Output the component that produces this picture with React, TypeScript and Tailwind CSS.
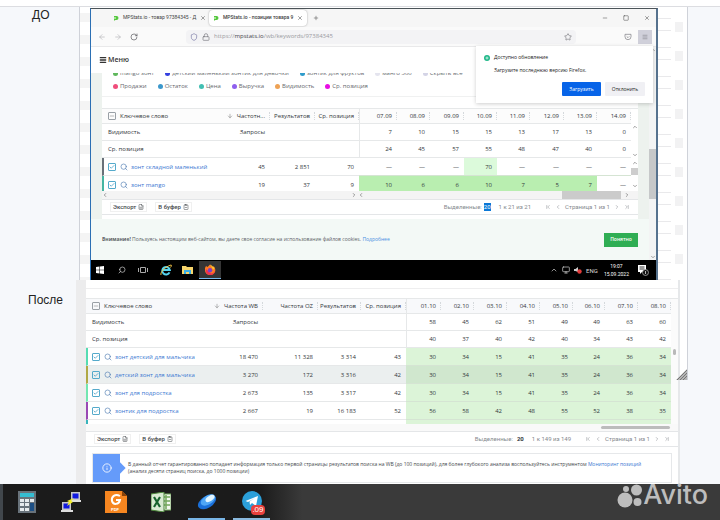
import type { ReactNode } from "react";
import {
  ArrowDown,
  ArrowLeft,
  ArrowRight,
  Check,
  ChevronDown,
  ChevronFirst,
  ChevronLast,
  ChevronLeft,
  ChevronRight,
  ChevronUp,
  ClipboardMinus,
  FileSpreadsheet,
  Info,
  Lock,
  Menu,
  Minus,
  Monitor,
  Plus,
  RotateCw,
  Search,
  Shield,
  Square,
  Star,
  X,
} from "lucide-react";

type Row = {
  word: string;
  stats: string[];
  days: string[];
  strip: string;
  cells: string;
  hovered?: boolean;
};

const SEPTEMBER = ["07.09", "08.09", "09.09", "10.09", "11.09", "12.09", "13.09", "14.09"];
const OCTOBER = ["01.10", "02.10", "03.10", "04.10", "05.10", "06.10", "07.10", "08.10"];

const beforeRows: Row[] = [
  {
    word: "зонт складной маленький",
    stats: ["45", "2 851", "70"],
    days: ["—", "—", "—", "70", "—", "—", "—", "—"],
    strip: "border-l-[#687078]",
    cells: "bg-[#dcfadb]",
  },
  {
    word: "зонт mango",
    stats: ["19", "37", "9"],
    days: ["10", "6", "6", "10", "7", "5", "7", "—"],
    strip: "border-l-[#45b5a2]",
    cells: "bg-[#b9eeb0] font-medium",
  },
];

const afterRows: Row[] = [
  {
    word: "зонт детский для мальчика",
    stats: ["18 470", "11 328", "3 314", "43"],
    days: ["30", "34", "15", "41", "35", "24", "36", "34"],
    strip: "border-l-[#55dcb2]",
    cells: "bg-[#dcf4d8]",
  },
  {
    word: "детский зонт для мальчика",
    stats: ["3 270", "172", "3 316", "42"],
    days: ["30", "34", "15", "41", "35", "24", "36", "34"],
    strip: "border-l-[#b0a845]",
    cells: "bg-[#d0e7ce]",
    hovered: true,
  },
  {
    word: "зонт для подростка",
    stats: ["2 673", "135", "3 317", "42"],
    days: ["30", "34", "15", "41", "35", "24", "36", "34"],
    strip: "border-l-[#72e6b0]",
    cells: "bg-[#dcf4d8]",
  },
  {
    word: "зонтик для подростка",
    stats: ["2 667", "19", "16 183", "52"],
    days: ["56", "58", "42", "48", "55", "52", "38", "35"],
    strip: "border-l-[#9a48b4]",
    cells: "bg-[#dcf4d8]",
  },
  {
    word: "",
    stats: ["", "", "", ""],
    days: ["", "", "", "", "", "", "", ""],
    strip: "border-l-[#38b4bc]",
    cells: "bg-[#dcf4d8]",
  },
];

function CheckBox({ label, partial }: { label: string; partial?: boolean }) {
  return (
    <span className="relative inline-flex size-2 shrink-0">
      <input
        type="checkbox"
        aria-label={label}
        defaultChecked={!partial}
        className={`size-2 appearance-none rounded-[1px] border ${partial ? "border-[#9aa0a6]" : "border-[#55aacb]"}`}
      />
      {partial ? (
        <Minus className="pointer-events-none absolute inset-px size-1.5 text-[#777]" />
      ) : (
        <Check strokeWidth={3} className="pointer-events-none absolute inset-px size-1.5 text-[#3f9bc4]" />
      )}
    </span>
  );
}

type KeywordTableProps = {
  stats: string[];
  statWidths: string[];
  dates: string[];
  dayWidths: string[];
  visibility: string[];
  average: string[];
  rows: Row[];
  headClass: string;
};

function KeywordTable(props: KeywordTableProps) {
  const { stats, statWidths, dates, dayWidths, visibility, average, rows, headClass } = props;
  const line = "border-b border-[#e6e8e9]";
  return (
    <table className="w-full table-fixed border-separate border-spacing-0 text-right text-[6px] leading-[8px] text-[#33373b]">
      <colgroup>
        <col />
        {[...statWidths, ...dayWidths].map((width, i) => (
          <col key={i} className={width} />
        ))}
      </colgroup>
      <thead>
        <tr className={`h-4 ${headClass}`}>
          <th className={`border-t p-0 pl-1.5 text-left font-medium ${line}`}>
            <span className="flex items-center gap-1">
              <CheckBox label="Выбрать все" partial />
              Ключевое слово
            </span>
          </th>
          {stats.map((name, i) => (
            <th key={name} className={`border-t p-0 font-medium whitespace-nowrap ${line}`}>
              <span className="flex items-center justify-end border-r border-dotted border-[#d5d9dc] pr-1">
                {i === 0 && <ArrowDown className="mr-1 size-1.5 shrink-0 text-[#777]" />}
                {name}
              </span>
            </th>
          ))}
          {dates.map((date, i) => (
            <th key={date} className={`border-t p-0 font-medium ${i === 0 ? "border-l" : ""} ${line}`}>
              <span className="block border-r border-dotted border-[#d5d9dc] pr-1">{date}</span>
            </th>
          ))}
        </tr>
      </thead>
      <tbody>
        {[
          { name: "Видимость", values: visibility },
          { name: "Ср. позиция", values: average },
        ].map((summary, row) => (
          <tr key={summary.name} className="h-[17px]">
            <th className={`p-0 pl-1.5 text-left font-medium ${line}`}>{summary.name}</th>
            {stats.map((name, i) => (
              <td key={name} className={`p-0 pr-[5px] font-medium ${line}`}>
                {row === 0 && i === 0 ? "Запросы" : ""}
              </td>
            ))}
            {summary.values.map((value, i) => (
              <td key={i} className={`p-0 pr-[5px] ${i === 0 ? "border-l" : ""} ${line}`}>
                {value}
              </td>
            ))}
          </tr>
        ))}
        {rows.map((row) => (
          <tr key={row.word} className={`odd:h-[18px] even:h-[17px] ${row.hovered ? "bg-[#ebefef]" : ""}`}>
            <td className="p-0 text-left">
              <span className={`flex h-[18px] items-center gap-1 border-b border-l-2 border-b-[#e6e8e9] pl-1 ${row.strip}`}>
                <CheckBox label={row.word} />
                <Search className="size-2 shrink-0 text-[#5580b5]" />
                <a href="#" className="-ml-px whitespace-nowrap text-[#3c78d2]">
                  {row.word}
                </a>
              </span>
            </td>
            {row.stats.map((value, i) => (
              <td key={i} className={`p-0 pr-[5px] ${line}`}>
                {value}
              </td>
            ))}
            {row.days.map((value, i) => (
              <td key={i} className={`border-b border-[#d5e4d3] p-0 pr-[5px] ${value === "—" ? "" : row.cells}`}>
                {value}
              </td>
            ))}
          </tr>
        ))}
      </tbody>
    </table>
  );
}

function TableFooter({ selected, range }: { selected: ReactNode; range: string }) {
  return (
    <div className="flex h-4 items-center border-y border-[#e4e6e8] pr-2 font-['Roboto',sans-serif] text-[6px] leading-[8px] whitespace-nowrap text-[#85898e]">
      <button className="ml-2 flex items-center gap-0.5 border border-[#f0f0f0] px-0.5 font-medium text-[#45494d]">
        Экспорт <FileSpreadsheet className="size-1.5" />
      </button>
      <button className="ml-2 flex items-center gap-0.5 border border-[#f0f0f0] px-0.5 font-medium text-[#45494d]">
        В буфер <ClipboardMinus className="size-1.5" />
      </button>
      <span className="ml-auto">Выделенные:</span>
      {selected}
      <span className="ml-2">{range}</span>
      <button aria-label="Первая страница" className="ml-3.5">
        <ChevronFirst className="size-1.5" />
      </button>
      <button aria-label="Назад" className="ml-1">
        <ChevronLeft className="size-1.5" />
      </button>
      <span className="ml-1">Страница 1 из 1</span>
      <button aria-label="Вперед" className="ml-1">
        <ChevronRight className="size-1.5" />
      </button>
      <button aria-label="Последняя страница" className="ml-1">
        <ChevronLast className="size-1.5" />
      </button>
    </div>
  );
}

function Legend({ items }: { items: { name: string; color: string }[] }) {
  return (
    <ul className="flex gap-[11px] pl-[11px] text-[6px] leading-[8px] whitespace-nowrap text-[#65696d]">
      {items.map((item) => (
        <li key={item.name} className="flex items-center gap-0.5">
          <span className={`size-[5px] rounded-full ${item.color}`} />
          {item.name}
        </li>
      ))}
    </ul>
  );
}

function Favicon() {
  return (
    <svg viewBox="0 0 6 6" className="size-1.5 shrink-0">
      <path d="M1 1h2.5a2 2 0 0 1 0 4H2.5L1 5.8V3.5h2V2.6H1z" fill="#54c83c" />
    </svg>
  );
}

function UpdatePopup() {
  return (
    <div className="absolute top-[37px] right-[3px] flex h-[57px] w-[177px] flex-col bg-white px-2 pt-2 text-[5px] leading-[7px] text-[#222] shadow-[0_1px_4px_rgba(0,0,0,0.2)]">
      <div className="flex items-center gap-1">
        <span className="flex size-1.5 items-center justify-center rounded-full bg-[#20b889] text-white">
          <Plus strokeWidth={4} className="size-1" />
        </span>
        <strong className="font-medium">Доступно обновление</strong>
      </div>
      <p className="mt-1.5 pl-2.5">Загрузите последнюю версию Firefox.</p>
      <div className="mt-2 flex justify-end gap-1">
        <button className="h-3.5 w-[39px] rounded-[1px] bg-[#0764e8] text-white">Загрузить</button>
        <button className="h-3.5 w-10 rounded-[1px] bg-[#f0f0f4]">Отклонить</button>
      </div>
    </div>
  );
}

function BrowserChrome() {
  return (
    <>
      <div className="flex h-[18px] items-center bg-[#f6f6f6] font-['Roboto',sans-serif] text-[5px] whitespace-nowrap text-[#444]">
        <div className="flex w-[118px] items-center gap-1 pr-1.5 pl-[22px]">
          <Favicon />
          <span className="flex-1">MPStats.io - товар 97384345 - Д</span>
          <X className="size-1.5 shrink-0" />
        </div>
        <div className="flex h-4 w-[98px] items-center gap-1 rounded-sm bg-white px-1 shadow-[0_0_2px_rgba(0,0,0,0.35)]">
          <Favicon />
          <span className="flex-1 font-medium">MPStats.io - позиции товара 9</span>
          <X className="size-1.5 shrink-0" />
        </div>
        <Plus className="ml-1.5 size-1.5" />
        <div className="ml-auto flex items-center gap-[15px] pr-1.5">
          <Minus className="size-1.5" />
          <Square className="size-1.5" />
          <X className="size-1.5" />
        </div>
      </div>
      <div className="flex h-5 items-center border-b border-[#e9e9ea] bg-[#fafafa] text-[#77777d]">
        <ArrowLeft className="ml-[7px] size-2 text-[#b5b5b9]" />
        <ArrowRight className="ml-2 size-2 text-[#b5b5b9]" />
        <RotateCw className="ml-2 size-2 text-[#55555b]" />
        <div className="ml-12 flex h-3.5 w-0 flex-1 items-center rounded-sm bg-[#f3f3f5] px-1">
          <Shield className="size-2 shrink-0 text-[#7777a5]" />
          <Lock className="ml-1 size-2 shrink-0" />
          <p className="ml-1 text-[6px] text-[#9a9aa0]">
            https://<span className="text-[#44444a]">mpstats.io</span>/wb/keywords/97384345
          </p>
          <Star className="ml-auto size-2 shrink-0" />
        </div>
        <svg viewBox="0 0 24 24" className="ml-12 size-2" fill="none" stroke="currentColor" strokeWidth="2">
          <path d="M3 4h18v7a9 9 0 0 1-18 0zM8 10l4 4 4-4" />
        </svg>
        <div className="mr-1 ml-1.5 flex size-3.5 items-center justify-center bg-[#d0d0da]">
          <Menu className="size-1.5" />
        </div>
      </div>
    </>
  );
}

function RemoteTaskbar() {
  return (
    <div className="flex h-5 items-center bg-black text-[#d8d8d8]">
      <div className="flex flex-1 items-center">
        <svg viewBox="0 0 8 8" className="ml-[5px] size-2" fill="#fff">
          <path d="M0 1l3.5-.5v3.3H0zM4 .5L8 0v3.8H4zM0 4.3h3.5v3.3L0 7zM4 4.3h4V8l-4-.5z" />
        </svg>
        <Search className="ml-[14px] size-2 -scale-x-100" />
        <svg viewBox="0 0 10 8" className="ml-3 h-2 w-2.5" fill="none" stroke="#aaa">
          <path d="M2.5 1.5h5v5h-5zM.5 2v4M9.5 2v4" />
        </svg>
        <svg viewBox="0 0 12 12" className="ml-3 size-3" fill="none">
          <path d="M9.5 8.4A3.8 3.8 0 1 1 9.8 6H3" stroke="#55d4ef" strokeWidth="2" />
          <path d="M1 11C0 9 4 3 11 1c1 0 0 2-.5 2.5" stroke="#f1c34a" />
        </svg>
        <svg viewBox="0 0 11 10" className="ml-[10px] h-2.5 w-[11px]">
          <path d="M0 1h4l1 1h6v7H0z" fill="#f7d56b" />
          <path d="M2 5h7v4H7V7H4v2H2z" fill="#3ab0e8" />
        </svg>
        <div className="ml-1.5 flex h-[18px] w-[22px] items-center justify-center border-b border-[#76b9ed] bg-[#353535]">
          <svg viewBox="0 0 12 12" className="size-3">
            <path d="M1 4l1-2 1.5 1L6 .5 8 3l1-1c2 1.5 2.5 3 2.3 5A5.3 5.3 0 0 1 1 7z" fill="#ff7a22" />
            <path d="M2 5c-1 3 1 6 4 6s5-2 5-4c-1 2-3 3-5 2z" fill="#ef2f50" />
            <path d="M6 .5c2 1 3 2 3 3l1-1c1 2 0 3-1 3z" fill="#ffc832" />
            <circle cx="6" cy="6.3" r="2.2" fill="#7b3fc6" />
          </svg>
        </div>
      </div>
      <ChevronUp className="size-2" />
      <Monitor className="ml-1 size-2" />
      <svg viewBox="0 0 8 8" className="ml-1 size-2">
        <path d="M0 3h1.5L4 1v5L1.5 5H0z" fill="#ccc" />
        <circle cx="5.5" cy="5.5" r="2.2" fill="#e23b3b" />
      </svg>
      <span className="ml-1 font-['Roboto',sans-serif] text-[6px]">ENG</span>
      <time className="ml-1.5 text-center font-['Roboto',sans-serif] text-[5px] leading-[8px] text-white">
        19:07
        <br />
        15.09.2022
      </time>
      <svg viewBox="0 0 12 12" className="mr-[7px] ml-2 size-3">
        <path d="M1 1h8v7H5l-2 2V8H1z" fill="#fff" />
        <path d="M2.5 3h5M2.5 5h5" stroke="#333" />
        <circle cx="8.5" cy="8.5" r="3" fill="#111" stroke="#bbb" strokeWidth=".7" />
        <path d="M8.5 7v3" stroke="#ddd" strokeWidth=".8" />
      </svg>
    </div>
  );
}

function HorizontalScroll() {
  return (
    <div className="flex h-2 items-center bg-[#f4f4f4] text-[#444]">
      <ChevronLeft className="size-1.5" />
      <ChevronRight className="ml-[243px] size-1.5" />
      <ChevronLeft className="ml-px size-1.5" />
      <span className="ml-auto h-2 w-[59px] bg-[#cbcbcb]" />
      <ChevronRight className="mr-2 ml-[3px] size-1.5" />
    </div>
  );
}

function BeforeWindow() {
  return (
    <div className="relative flex min-w-0 flex-1 flex-col border-t border-r-2 border-l border-t-[#4b5358] border-r-[#56728e] border-l-[#2b6fb3] bg-white">
      <BrowserChrome />
      <div className="flex">
        <div className="min-w-0 flex-1">
          <div className="flex h-[26px] items-center gap-px pl-2 text-[7px] font-semibold text-[#333]">
            <Menu strokeWidth={4} className="size-2" />
            Меню
          </div>
          <div className="bg-[#edf2ee] px-[11px]">
            <div className="bg-white">
              <div className="flex h-1 items-end overflow-hidden">
                <Legend
                  items={[
                    { name: "mango зонт", color: "bg-[#5fb85c]" },
                    { name: "детский маленький зонтик для девочки", color: "bg-[#3440e0]" },
                    { name: "зонтик для фруктов", color: "bg-[#2f9ccb]" },
                    { name: "манго 300", color: "bg-[#e4e4ee]" },
                    { name: "Скрыть все", color: "bg-[#d4d4e6]" },
                  ]}
                />
              </div>
              <div className="border-b border-[#f0f1f1] pt-[5px] pb-1.5">
                <Legend
                  items={[
                    { name: "Продажи", color: "bg-[#f04e7c]" },
                    { name: "Остаток", color: "bg-[#3c98cc]" },
                    { name: "Цена", color: "bg-[#42bfb2]" },
                    { name: "Выручка", color: "bg-[#8f5fee]" },
                    { name: "Видимость", color: "bg-[#eea255]" },
                    { name: "Ср. позиция", color: "bg-[#e80ee4]" },
                  ]}
                />
              </div>
              <div className="mt-[11px] flex h-[83px] overflow-hidden">
                <div className="min-w-0 flex-1">
                  <KeywordTable
                    stats={["Частотн...", "Результатов", "Ср. позиция"]}
                    statWidths={["w-[43px]", "w-[45px]", "w-[44px]"]}
                    dates={SEPTEMBER}
                    dayWidths={[
                      "w-[38px]",
                      "w-[33px]",
                      "w-[34px]",
                      "w-[33px]",
                      "w-[33px]",
                      "w-[34px]",
                      "w-[33px]",
                      "w-[34px]",
                    ]}
                    visibility={["7", "10", "15", "15", "13", "17", "13", "0"]}
                    average={["24", "45", "57", "55", "48", "47", "40", "0"]}
                    rows={beforeRows}
                    headClass="bg-[#fcfcfc]"
                  />
                </div>
                <div className="flex w-[7px] flex-col items-center border-t border-[#e6e8e9] pt-[15px] text-[#444]">
                  <ChevronUp className="size-1.5 shrink-0" />
                  <ChevronDown className="mt-[22px] size-1.5 shrink-0" />
                  <ChevronUp className="mt-0.5 size-1.5 shrink-0" />
                  <span className="mt-0.5 h-[7px] w-full shrink-0 bg-[#cdcdcd]" />
                  <ChevronDown className="mt-2 size-1.5 shrink-0" />
                </div>
              </div>
              <HorizontalScroll />
              <TableFooter
                selected={<mark className="ml-0.5 bg-[#0a78d7] text-white">20</mark>}
                range="1 к 21 из 21"
              />
              <div className="h-1" />
            </div>
          </div>
          <div className="flex h-[41px] items-center bg-[#f3f9f6] px-[11px] text-[5px] text-[#5c6266]">
            <p className="flex-1">
              <b>Внимание!</b> Пользуясь настоящим веб-сайтом, вы даете свое согласие на использование файлов cookies.{" "}
              <a href="#" className="text-[#4a90e2]">
                Подробнее
              </a>
            </p>
            <button className="h-3.5 w-[34px] bg-[#2fae54] font-semibold text-white">Понятно</button>
          </div>
        </div>
        <div className="flex w-[7px] flex-col items-center bg-[#f3f4f4] text-[#555]">
          <ChevronUp className="size-1.5" />
          <span className="mt-[96px] h-[50px] w-full bg-[#c6c8c9]" />
          <ChevronDown className="mt-auto size-1.5" />
        </div>
      </div>
      <RemoteTaskbar />
      <UpdatePopup />
    </div>
  );
}

function AfterPanel() {
  return (
    <div className="min-w-0 flex-1 border-r-2 border-l-[10px] border-r-[#e6e8ea] border-l-[#ececed] bg-white pb-px">
      <div className="h-[9px] border-b border-[#eeeeef]" />
      <div className="mt-[9px] flex h-[126px] overflow-hidden">
        <div className="min-w-0 flex-1">
          <KeywordTable
            stats={["Частота WB", "Частота OZ", "Результатов", "Ср. позиция"]}
            statWidths={["w-[48px]", "w-[55px]", "w-[43px]", "w-[45px]"]}
            dates={OCTOBER}
            dayWidths={[
              "w-[35px]",
              "w-[33px]",
              "w-[33px]",
              "w-[33px]",
              "w-[33px]",
              "w-[32px]",
              "w-[33px]",
              "w-[33px]",
            ]}
            visibility={["58", "45", "62", "51", "49", "49", "63", "60"]}
            average={["40", "37", "40", "42", "40", "34", "43", "42"]}
            rows={afterRows}
            headClass="bg-[#f8f9fb]"
          />
        </div>
        <div className="w-[7px] border-t border-[#e6e8e9] bg-[#fbfbfb] pt-[50px]">
          <span className="mx-auto block h-1.5 w-[3px] rounded-full bg-[#b9b9b9]" />
        </div>
      </div>
      <div className="flex h-[7px] items-center justify-end bg-[#f9f9f9] pr-2">
        <span className="h-[3px] w-[69px] rounded-full bg-[#bcbcbc]" />
      </div>
      <TableFooter selected={<b className="ml-1 text-[#33373b]">20</b>} range="1 к 149 из 149" />
      <div className="mx-1.5 mt-1.5 flex h-[30px] border border-[#e6e8ea] text-[5px] leading-[7px] text-[#45494d]">
        <div className="relative flex w-[27px] shrink-0 items-center justify-center bg-[#659bfa] text-white">
          <Info className="size-2.5" />
          <span className="absolute -right-1 size-2 rotate-45 bg-[#659bfa]" />
        </div>
        <p className="pt-[7px] pl-2 whitespace-nowrap">
          В данный отчет гарантированно попадает информация только первой страницы результатов поиска на WB (до 100
          позиций), для более глубокого анализа воспользуйтесь инструментом{" "}
          <a href="#" className="text-[#3c78d2]">
            Мониторинг позиций
          </a>
          <br />
          (анализ десяти страниц поиска, до 1000 позиции)
        </p>
      </div>
    </div>
  );
}

function DesktopTaskbar() {
  return (
    <div className="relative flex h-9 items-center bg-linear-to-r from-[#1b1b1b] from-36% to-[#3a3a3a] to-42% font-['Liberation_Sans',sans-serif]">
      <span className="h-full w-[3px] bg-[#41474c]" />
      <svg viewBox="0 0 18 22" className="ml-[15px] h-[22px] w-[18px]">
        <path d="M0 0h18v22H0z" fill="#69737b" />
        <path d="M2 2h14v4H2z" fill="#35bdd2" />
        <path d="M2 8h4v3H2zM7 8h4v3H7zM12 8h4v3h-4zM2 12h4v3H2zM7 12h4v3H7zM2 17h4v3H2zM7 17h4v3H7z" fill="#e6eaec" />
        <path d="M12 12h4v8h-4z" fill="#1d4f84" />
      </svg>
      <svg viewBox="0 0 20 20" className="ml-[25px] size-5">
        <path d="M10 0h9v8h-9zM1 10h9v8H1z" fill="#c8c8c8" />
        <path d="M11.5 1.5h6v5h-6zM2.5 11.5h6v5h-6z" fill="#1018e0" />
        <path d="M8 8h12v2H8zM0 18h12v2H0z" fill="#dedede" />
        <path d="M13 6l-3 3 2 1-6 4 2-4-2-1z" fill="#f3ee23" />
      </svg>
      <svg viewBox="0 0 22 22" className="ml-6 size-[22px]">
        <path d="M0 0h17l5 5v17H0z" fill="#f68620" />
        <path d="M17 0v5h5z" fill="#8a4208" />
        <path d="M15 5c-5-3-9 1-8 5s7 4 8-1h-4" fill="none" stroke="#fff" strokeWidth="2" />
        <text x="6" y="20" fontSize="4" fontWeight="700" fill="#fff">
          PDF
        </text>
      </svg>
      <svg viewBox="0 0 20 20" className="ml-6 size-5">
        <path d="M8 2h12v16H8z" fill="#f2f7ef" stroke="#72a65c" />
        <path d="M11 5h8M11 9h8M11 13h8M15 3v14" stroke="#72a65c" strokeWidth="1.5" />
        <path d="M0 2l13-2v20L0 18z" fill="#d9ead3" stroke="#4d873c" />
        <path d="M3 5l6 10M9 5L3 15" stroke="#17622d" strokeWidth="2.2" />
      </svg>
      <div className="ml-[17px] flex h-full w-[37px] items-center justify-center border-b-2 border-[#78b5e6]">
        <svg viewBox="0 0 20 20" className="size-5">
          <ellipse cx="10" cy="11" rx="10" ry="6" fill="#1a6fd8" transform="rotate(-32 10 11)" />
          <ellipse cx="11" cy="9" rx="8" ry="4.5" fill="#4fa6f5" transform="rotate(-32 11 9)" />
          <ellipse cx="13" cy="7.5" rx="5" ry="2.6" fill="#e2f5ff" transform="rotate(-32 13 7.5)" />
        </svg>
      </div>
      <div className="ml-2 flex h-full w-[37px] items-center justify-center border-b-2 border-[#8ab9de]">
        <div className="relative size-5">
          <svg viewBox="0 0 20 20" className="size-5">
            <circle cx="10" cy="10" r="10" fill="#2b9fd9" />
            <path d="M3.5 10L16 5l-2 10-4-3-2 2-.5-3.5L13 7l-7 4z" fill="#fff" />
          </svg>
          <span className="absolute -right-[3px] -bottom-1 rounded-sm bg-[#e8413e] px-px text-[8px] leading-[10px] text-white">
            .09
          </span>
        </div>
      </div>
      <div className="absolute -top-1 right-3 flex items-center text-[#bdbdbd]">
        <svg viewBox="0 0 26 26" className="mt-px size-[26px]" fill="currentColor">
          <circle cx="9" cy="6" r="3" />
          <circle cx="19.5" cy="7" r="5.500" />
          <circle cx="8" cy="17" r="7.5" />
          <circle cx="20.5" cy="19" r="4" />
        </svg>
        <span className="font-['Inter',sans-serif] text-[27px] leading-[30px] font-medium">Avito</span>
      </div>
    </div>
  );
}

export default function App() {
  return (
    <div className="flex flex-col bg-[#f6f8fb] font-['Open_Sans',sans-serif]">
      <div className="h-[7px] border-b border-[#dcdde1] bg-white" />
      <section className="flex">
        <h2 className="w-[79px] pl-8 font-['Liberation_Sans',sans-serif] text-[12px] leading-4 text-[#222]">ДО</h2>
        <div className="flex min-w-0 flex-1 border-x border-[#cfd2d9] bg-white pt-px">
          <div className="w-2.5 bg-[repeating-linear-gradient(to_bottom,#fff_0_5px,#f4f4f4_5px_14px,#fff_14px_22px)]" />
          <BeforeWindow />
          <div className="flex w-[29px] gap-1 pr-1">
            <div className="flex-1 bg-[repeating-linear-gradient(to_bottom,#fff_0_10px,#e9e9eb_10px_11px,#fff_11px_22px,#e9e9eb_22px_23px,#fff_23px_29px)]" />
            <div className="w-2 bg-[repeating-linear-gradient(to_bottom,#fff_0_14px,#f2f2f3_14px_24px,#fff_24px_29px)]" />
          </div>
        </div>
        <div className="w-8" />
      </section>
      <section className="flex">
        <h2 className="w-[76px] pt-3 pl-7 font-['Liberation_Sans',sans-serif] text-[12px] leading-4 text-[#222]">
          После
        </h2>
        <AfterPanel />
        <div className="w-10">
          <div className="relative h-[100px] w-2 border-r border-[#cfd2d9] bg-white">
            <svg viewBox="0 0 11 11" className="absolute right-0 bottom-0 size-[11px]">
              <path d="M11 0v11H0z" fill="#b5b5b5" />
              <path d="M1 11L11 1M4 11l7-7M7 11l4-4" stroke="#777" />
            </svg>
          </div>
        </div>
      </section>
      <DesktopTaskbar />
    </div>
  );
}
